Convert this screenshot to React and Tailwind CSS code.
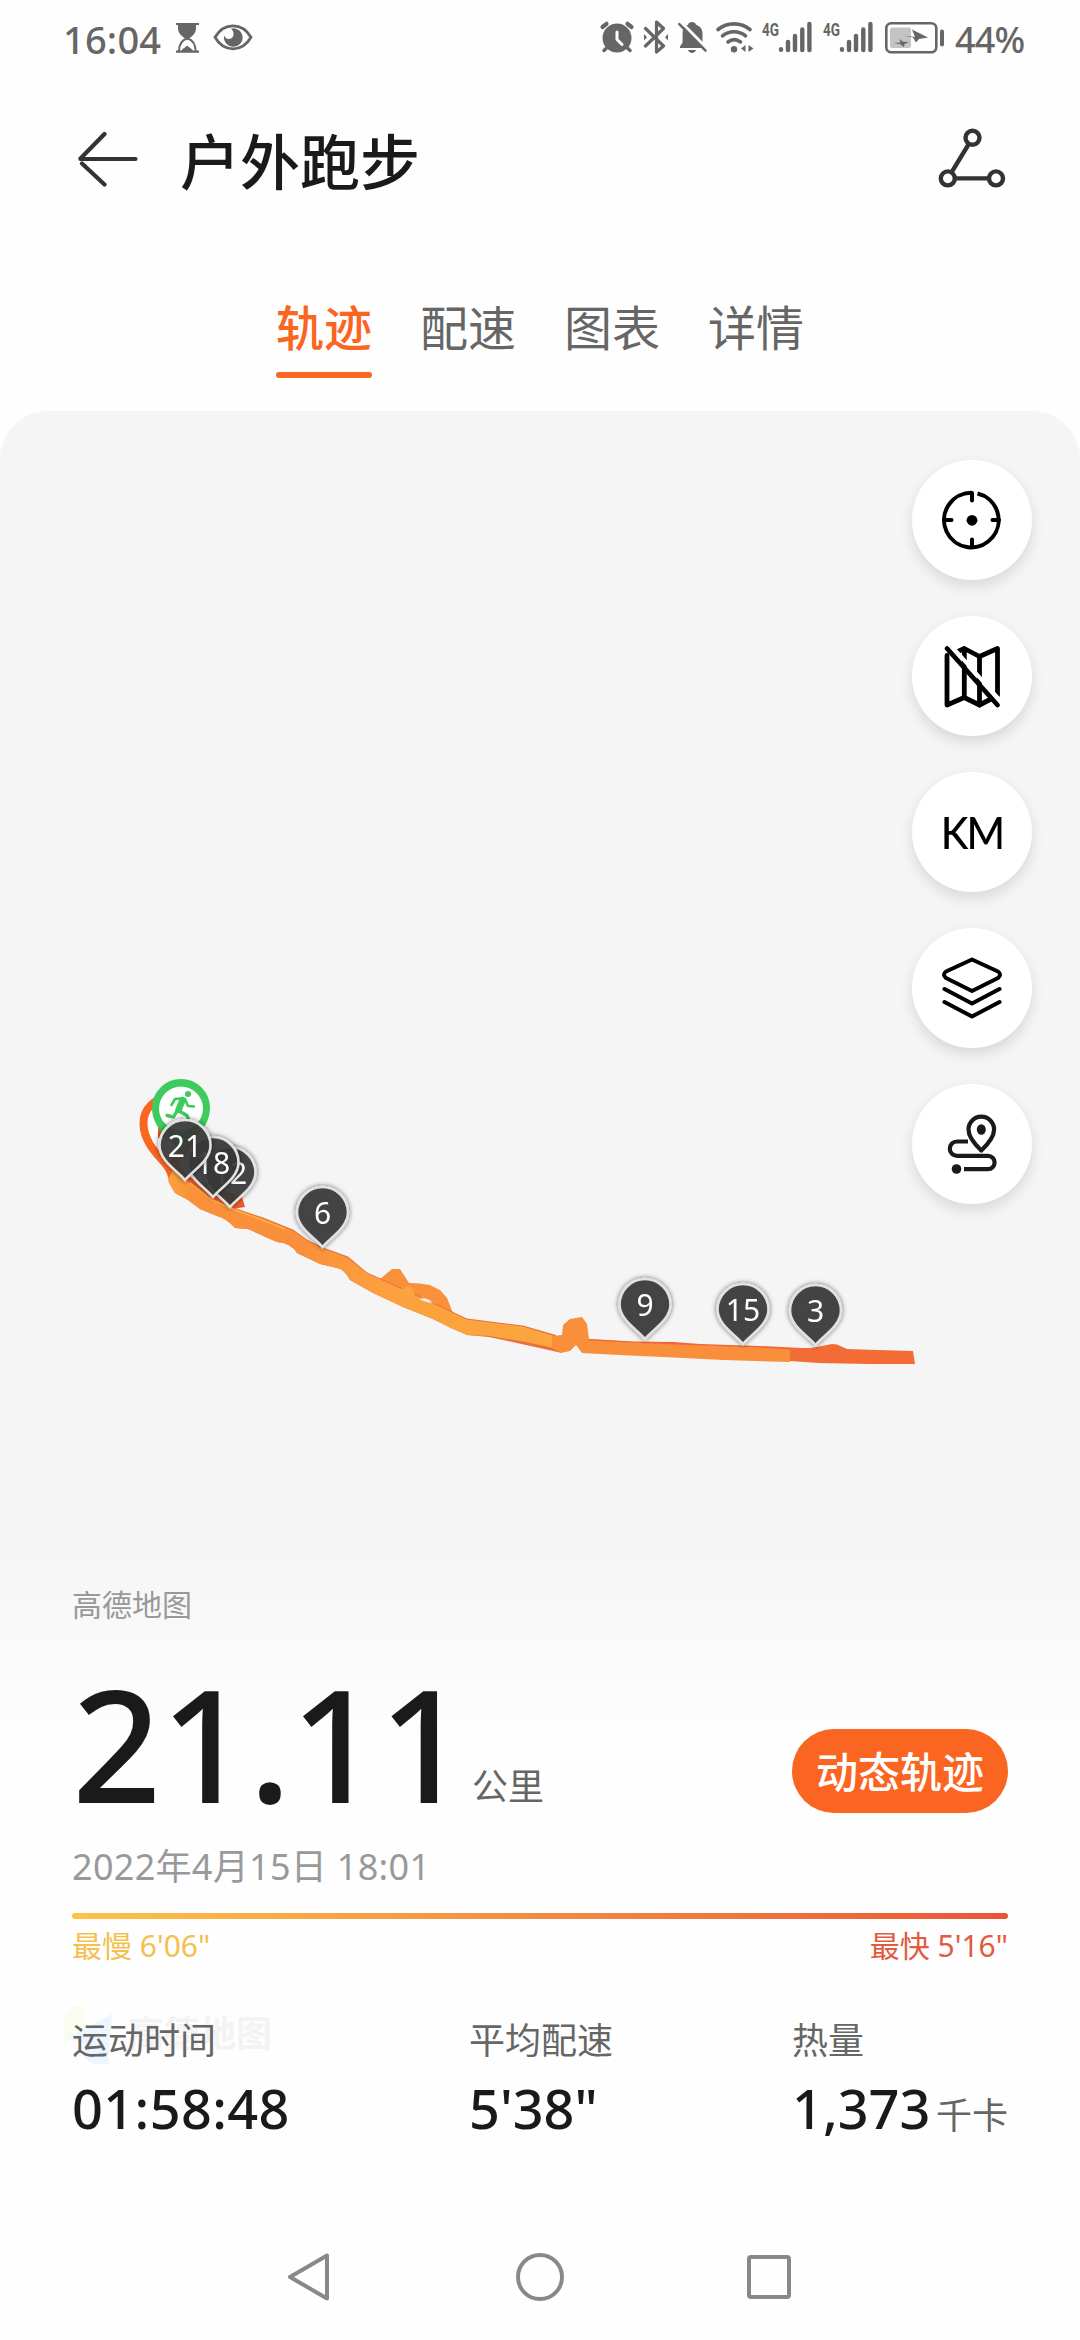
import React from 'react';

const tabs = ['轨迹', '配速', '图表', '详情'];

const pins = [
  { label: '12', x: 230, y: 1146 },
  { label: '18', x: 213, y: 1136 },
  { label: '21', x: 185, y: 1119 },
  { label: '6', x: 322.5, y: 1186 },
  { label: '9', x: 645, y: 1278 },
  { label: '15', x: 743, y: 1283 },
  { label: '3', x: 815.5, y: 1284 },
];

const Signal = () => (
  <svg className="overflow-visible" width="50" height="34" viewBox="762 20 50 34" fill="none" stroke="#666" strokeWidth="4.4" strokeLinecap="round">
    <text x="762" y="35.500" textLength="17" lengthAdjust="spacingAndGlyphs" fontSize="19" fontWeight="700" fill="#666" stroke="none" fontFamily="Roboto, sans-serif">4G</text>
    <path d="M781 49.2v.6M788 42v8M795 36v14M802.300 29.500v20.500M809.400 24v26" />
  </svg>
);

const StatusBar = () => (
  <div className="h-[76px] shrink-0 flex items-start pt-5 pl-16 pr-[57px] text-[#666]">
    <span className="-mt-px -ml-px w-[112px] text-[38px] leading-[40px] font-medium tracking-[0.2px]">16:04</span>
    <svg width="26" height="34" viewBox="175 20 26 34" fill="none" stroke="#666">
      <path d="M176 24h23M176 51.700h23" strokeWidth="2.200" />
      <path d="M178 24h18v4c0 5-3 7.500-7 10.500h-4c-4-3-7-5.500-7-10.500z" fill="#666" stroke="none" />
      <path d="M179 51c0-8 3-11 8.300-12.500c5 1.500 8.300 4.500 8.300 12.500" strokeWidth="2" />
      <path d="M181 51.500c1-3 4-3.500 6.200-6c2 2.500 5 3 6.200 6z" fill="#666" stroke="none" />
    </svg>
    <svg className="ml-3" width="40" height="34" viewBox="213 20 40 34" fill="none">
      <path d="M215 37.300c4-7 10-11.500 18-11.500s14 4.500 18 11.500c-4 7-10 11.500-18 11.500s-14-4.500-18-11.500z" stroke="#666" strokeWidth="2.800" />
      <path d="M231 28.500a9.300 9.300 0 1 1-6.800 7c1.200 3.500 4.800 4.400 7.300 2.700c3-2.200 2.600-6.800-.5-9.700z" fill="#666" />
    </svg>
    <div className="ml-auto flex items-start">
      <svg width="36" height="34" viewBox="599 20 36 34" fill="none" stroke="#666" strokeLinecap="round">
        <circle cx="617" cy="38" r="14.500" fill="#666" stroke="none" />
        <path d="M602.500 27l4-3.200M631.500 27l-4-3.200" strokeWidth="4.200" />
        <path d="M607 47.500l-3 3M627 47.500l3 3" strokeWidth="3.500" />
        <path d="M617 32v7.500l5 5" stroke="#fff" strokeWidth="3" />
      </svg>
      <svg className="ml-2" width="26" height="34" viewBox="643 20 26 34" fill="none" stroke="#666" strokeWidth="3.200" strokeLinecap="round">
        <path d="M645.500 28.500l18 17.500l-7 6v-30l7 6.500l-18 17.500" strokeLinejoin="round" />
        <path d="M644 34v6.500l3-3.200zM668 34v6.500l-3-3.200z" fill="#666" stroke="none" />
      </svg>
      <svg className="ml-2" width="32" height="34" viewBox="677 20 32 34" fill="none">
        <path d="M680 48v-1.600l2.600-3.800v-9c0-5 2-7.500 5.400-8.800c.6-1.800 2-2.800 4-2.800s3.500 1 4.100 2.800c4.200 1.500 6.400 4.500 6.400 8.800v9l2.500 3.800v1.600zM688 50h8c-1 2.200-2.400 3-4 3s-3-.8-4-3z" fill="#666" />
        <path d="M681.500 22.500l28 28.500" stroke="#fff" strokeWidth="3" />
        <path d="M679.300 24.200l26.200 26.500" stroke="#666" strokeWidth="2.600" strokeLinecap="round" />
      </svg>
      <svg className="ml-[6px]" width="40" height="34" viewBox="715 20 40 34" fill="none" stroke="#666" strokeWidth="3.600" strokeLinecap="round">
        <path d="M718 29.500c9-7.500 23-7.500 32 0M722.500 35.800c6.500-5.500 16.500-5.500 23 0M728 42c4-3 8.500-3 12.500 0" />
        <circle cx="734" cy="49.300" r="3.200" fill="#666" stroke="none" />
        <path d="M745.500 45v7l-4.500-3.500zM748.500 45v7l5-3.500z" fill="#666" stroke="none" />
      </svg>
      <div className="ml-[7px] flex gap-[11px]">
        <Signal />
        <Signal />
      </div>
      <svg className="ml-3" width="60" height="34" viewBox="885 21 60 34" fill="none">
        <rect x="886.300" y="24.200" width="50" height="29" rx="5" stroke="#666" strokeWidth="2.600" />
        <rect x="890" y="28.500" width="21" height="20.500" rx="2" fill="#c4c4c4" />
        <path d="M903 36.500l12 1.500l-3-7.500l16 8l-9 1.500l-3 3.500l-3-5zM893.500 44l7-.5l-1-3.600l3.500 2.800l6 .3l-4.500 2l-.5 3l-4-3z" fill="#666" />
        <path d="M942 32.500v13" stroke="#666" strokeWidth="4" strokeLinecap="round" />
      </svg>
      <span className="ml-[10px] w-[68px] text-[36px] leading-[40px] font-medium tracking-[-0.8px]">44%</span>
    </div>
  </div>
);

const Header = () => (
  <div className="h-[168px] shrink-0 flex items-center pl-[78px] pr-[74px]">
    <svg className="-mt-[2px]" width="60" height="56" viewBox="78 131 60 56" fill="none" stroke="#333" strokeWidth="4.200" strokeLinecap="round">
      <path d="M104.500 134L80.500 158.500M80.500 159h55M104.500 184.500L82 163.500" />
    </svg>
    <h1 className="ml-[42px] pt-[3px] text-[60px] leading-[72px] font-medium text-[#1a1a1a]">户外跑步</h1>
    <svg className="ml-auto -mt-1" width="68" height="62" viewBox="938 127 68 62" fill="none" stroke="#333" strokeWidth="4.400">
      <circle cx="972.500" cy="137.800" r="7" />
      <circle cx="947.800" cy="178.400" r="7" />
      <circle cx="996" cy="178.400" r="7" />
      <path d="M968.800 144L951.500 172.400M955 178.400h34" />
    </svg>
  </div>
);

const Tabs = () => (
  <div className="h-[167px] shrink-0 flex justify-center gap-12 pt-[56px]">
    {tabs.map((tab, i) => (
      <div
        key={tab}
        className={`w-24 text-[48px] leading-[56px] whitespace-nowrap ${i === 0 ? 'text-[#fb6522] font-medium' : 'text-[#666]'}`}
      >
        {tab}
        {i === 0 && <div className="mt-4 h-[6px] rounded-full bg-[#fb6522]" />}
      </div>
    ))}
  </div>
);

const Fab = ({ children }) => (
  <button className="w-[120px] h-[120px] rounded-full bg-white flex items-center justify-center shadow-[0_6px_14px_rgba(0,0,0,0.12)]">
    {children}
  </button>
);

const MapButtons = () => (
  <div className="absolute right-12 top-[49px] flex flex-col gap-9">
    <Fab>
      <svg width="72" height="72" viewBox="0 0 72 72" fill="none" stroke="#000" strokeWidth="4" strokeLinecap="round">
        <path d="M36 8.800A27.300 27.300 0 1 0 41.500 9.500" strokeLinecap="butt" />
        <path d="M36 9v7.500M36 63v-7.500M9 36h6.500M63 36h-6.500" />
        <circle cx="36" cy="36.300" r="5.400" fill="#000" stroke="none" />
      </svg>
    </Fab>
    <Fab>
      <svg width="72" height="72" viewBox="0 0 72 72" fill="none" stroke="#000" strokeWidth="4.800" strokeLinecap="round" strokeLinejoin="round">
        <path d="M11 15.500v49.500L28.300 57.500L43.500 65L55 59" />
        <path d="M22 11.500L28.300 8.500L43.500 16.500L61.500 8.500v47" />
        <path d="M28.300 9v48M43.500 17v48" />
        <path d="M15.500 6l50 56" stroke="#fff" strokeWidth="4" />
        <path d="M11 8.500l50.500 56.500" />
      </svg>
    </Fab>
    <Fab>
      <span className="text-[45px] leading-none text-black font-[Lato] font-medium tracking-[-2px] scale-x-[0.92]">KM</span>
    </Fab>
    <Fab>
      <svg width="72" height="72" viewBox="0 0 72 72" fill="none" stroke="#000" strokeWidth="4" strokeLinecap="round" strokeLinejoin="round">
        <path d="M36 7.500L62 19.500q4 3 0 6.500L36 39L10 26q-4-3.500 0-6.500z" />
        <path d="M8.500 37L36 51.500L63.500 37M8.500 50L36 64.500L63.500 50" />
      </svg>
    </Fab>
    <Fab>
      <svg width="72" height="72" viewBox="0 0 72 72" fill="none" stroke="#1a1a1a" strokeWidth="4.200">
        <path d="M45.300 42.500C39 36.500 32.500 29.500 32.500 21.500a12.800 12.800 0 0 1 25.600 0C58.100 29.500 51.600 36.500 45.300 42.500z" strokeLinejoin="round" />
        <ellipse cx="45.300" cy="21.500" rx="4.500" ry="5.200" fill="#1a1a1a" stroke="none" />
        <path d="M32 33.500H21a7.200 7.200 0 0 0 0 14.400H52a6.600 6.600 0 0 1 0 13.200H28" />
        <circle cx="20.500" cy="61" r="4.800" fill="#1a1a1a" stroke="none" />
      </svg>
    </Fab>
  </div>
);

const Pin = ({ label, x, y }) => (
  <g transform={`translate(${x} ${y})`}>
    <path
      d="M0 61C-7 52-25.500 42-25.500 26.500A25.500 25.500 0 0 1 25.500 26.500C25.500 42 7 52 0 61Z"
      fill="#383838"
      fillOpacity="0.86"
      stroke="#e2e2e2"
      strokeWidth="2.600"
    />
    <text x="0" y="37.500" textAnchor="middle" fontSize="30" fill="#fff">{label}</text>
  </g>
);

const TrackMap = () => (
  <svg className="block" width="1080" height="1129" viewBox="0 411 1080 1129" fill="none">
    <defs>
      <filter id="pin-shadow" x="-30%" y="-30%" width="160%" height="160%">
        <feDropShadow dx="0" dy="0" stdDeviation="2.800" floodColor="#000" floodOpacity="0.6" />
      </filter>
      <linearGradient id="pace" gradientUnits="userSpaceOnUse" x1="163" y1="0" x2="554" y2="0">
        <stop offset="0" stopColor="#fba63e" />
        <stop offset="0.080" stopColor="#fa9038" />
        <stop offset="0.350" stopColor="#fa8f3b" />
        <stop offset="0.550" stopColor="#fba03d" />
        <stop offset="1" stopColor="#fba63e" />
      </linearGradient>
    </defs>

    {/* detours beside the main road */}
    <path d="M380 1279L392 1269H400L409 1283L420 1283.500L430 1285L440 1290L447 1298L453 1313L437 1307Q432 1298 415 1296L405 1292Z" fill="#f9913c" />
    <path d="M160 1130L187 1176L242 1197L245 1207L226 1210L180 1185Z" fill="#ef5a30" />

    {/* main track with the faster lap showing along its edge */}
    <path d="M163 1150L187 1180L212 1198L235 1208L263 1217.500L293 1229.500L307 1239.500L323 1247.500L348 1256.500L367 1272.500L403 1288.500L452 1311.500L467 1318.500L523 1325.500L556 1335L562 1353L526 1345L489 1337L467 1335L451 1328L433 1319L403 1307L373 1293L350 1280Q344 1269 337 1268L320 1264L297 1253Q291 1243 277 1242L248 1229L235 1228Q226 1218 217 1216L200 1209L188 1200L175 1193L169 1183Z" fill="#e9703a" />
    <path d="M163 1150L187 1181L212 1200L235 1209L263 1218.500L292 1230.500L307 1240.500L323 1248.500L347 1257.500L367 1273.500L403 1289.500L452 1312.500L467 1319.500L523 1326.500L554 1336V1348L526 1342L489 1336L467 1335L451 1328L433 1319L403 1307L373 1293L350 1280Q344 1269 337 1268L320 1264L297 1253Q291 1243 277 1242L248 1229L235 1228Q226 1218 217 1216L200 1209L188 1200L175 1193L169 1183Z" fill="url(#pace)" />
    <path d="M190 1183L212 1200L235 1210L262 1220L285 1229" stroke="#fcb043" strokeWidth="1.500" />
    <circle cx="408" cy="1293" r="6.500" fill="#fba33e" />
    <path d="M419 1299Q427 1297 432 1303.500L424 1301Z" fill="#f8f0e8" />
    <path d="M552 1336L562 1335L563 1325L570 1319L582 1317L587 1324L589 1339L634 1342L674 1344L760 1347L791 1348.500L790 1362L723 1360L663 1357L619 1355L582 1353L576 1345L570 1351L561 1353L552 1348Z" fill="#fa8f3b" />
    <path d="M589 1339L634 1341.500L674 1342L700 1344L760 1346L811 1348.500L790 1349.500L760 1347.500L674 1344.500L589 1340.500Z" fill="#ee6738" />
    <path d="M790 1348L811 1348L822 1346L832 1344L837 1344.500L847 1349L878 1350L913 1351L915 1364H867L819 1363L790 1361Z" fill="#f46c35" />

    {/* finish pin, mostly covered */}
    <path d="M169 1169C164 1159 143.500 1146 143.500 1123A25.500 25.500 0 0 1 194.500 1123C194.500 1146 174 1159 169 1169Z" fill="#fff" stroke="#fb6522" strokeWidth="8" />
    <path d="M158 1126h12v12h-12z" fill="#ef5a30" />

    {/* start pin */}
    <path d="M181 1148C175 1138 155.500 1128 155.500 1108A25.500 25.500 0 0 1 206.500 1108C206.500 1128 187 1138 181 1148Z" fill="#3ccb5c" stroke="#3ccb5c" strokeWidth="7" />
    <circle cx="181" cy="1108.500" r="22" fill="#fff" />
    <circle cx="188" cy="1094" r="3" fill="#3ccb5c" />
    <g stroke="#3ccb5c" strokeLinecap="round" strokeLinejoin="round">
      <path d="M182.500 1100L178.500 1110" strokeWidth="6.500" />
      <path d="M181 1098.500L175 1099L171.500 1105M185 1099L188 1106L194 1106.500" strokeWidth="2.600" />
      <path d="M179 1111L187 1115.500L189.500 1123M177 1111L173.500 1117L167 1115.500" strokeWidth="3.400" />
    </g>

    {pins.map((pin) => (
      <g key={pin.label} filter="url(#pin-shadow)">
        <Pin {...pin} />
      </g>
    ))}
  </svg>
);

const Summary = () => (
  <div className="h-[674px] shrink-0 px-[72px] pt-[41px] bg-linear-to-b from-[#f5f5f5] to-[#fefefe] to-[200px]">
    <p className="text-[30px] leading-[48px] text-[#999]">高德地图</p>

    <div className="mt-[54px] h-[140px] flex items-start">
      <span className="w-[400px] text-[156px] leading-[120px] font-medium tracking-[-0.8px] text-[#1a1a1a]">21.11</span>
      <span className="mt-[80px] text-[36px] leading-[48px] text-[#666]">公里</span>
      <button className="ml-auto mt-[46px] w-[216px] h-[84px] rounded-full bg-[#fb6522] text-white text-[42px] leading-[86px] font-medium">
        动态轨迹
      </button>
    </div>

    <p className="mt-5 text-[36px] leading-[48px] tracking-[0.3px] text-[#999]">2022年4月15日 18:01</p>
    <div className="mt-[22px] h-[6px] rounded-full bg-linear-to-r from-[#fcc348] via-[#f28b42] to-[#ea5438]" />
    <div className="mt-[7px] flex justify-between text-[30px] leading-[40px]">
      <span className="text-[#f4c04e]">最慢 6'06"</span>
      <span className="text-[#e25b3e]">最快 5'16"</span>
    </div>

    <div className="relative mt-[51px] grid grid-cols-[397px_323px_216px]">
      {/* map provider watermark showing through */}
      <div className="absolute -left-2 -top-[11px] flex items-start">
        <svg width="50" height="60" viewBox="0 0 50 60">
          <path d="M8 0h12v26L0 38V10z" fill="#f9fdf0" />
          <path d="M48 8L4 32l16 6v14l10 6h14z" fill="#edf5fe" />
        </svg>
        <span className="ml-[14px] mt-1 text-[36px] leading-[48px] font-bold text-[#f3f3f3]">高德地图</span>
      </div>
      <div className="relative whitespace-nowrap">
        <p className="text-[36px] leading-[48px] text-[#666]">运动时间</p>
        <p className="mt-[11px] text-[54px] leading-[64px] font-medium tracking-[0.4px] text-[#1a1a1a]">01:58:48</p>
      </div>
      <div className="whitespace-nowrap">
        <p className="text-[36px] leading-[48px] text-[#666]">平均配速</p>
        <p className="mt-[11px] text-[54px] leading-[64px] font-medium text-[#1a1a1a]">5'38"</p>
      </div>
      <div className="whitespace-nowrap">
        <p className="text-[36px] leading-[48px] text-[#666]">热量</p>
        <p className="mt-[11px] flex items-baseline justify-between text-[54px] leading-[64px] font-medium text-[#1a1a1a]">
          1,373
          <span className="text-[36px] font-normal text-[#666]">千卡</span>
        </p>
      </div>
    </div>
  </div>
);

const NavBar = () => (
  <div className="h-[126px] shrink-0 flex items-center bg-[#fefefe] pl-[286px]">
    <svg width="46" height="52" viewBox="286 2251 46 52" fill="none" stroke="#888" strokeWidth="4" strokeLinejoin="round">
      <path d="M290 2277L327 2255.500V2298.500Z" />
    </svg>
    <div className="ml-[184px] w-12 h-12 rounded-full border-4 border-[#888]" />
    <div className="ml-[183px] w-11 h-11 rounded-[4px] border-4 border-[#888]" />
  </div>
);

export default function App() {
  return (
    <div className="w-[1080px] h-[2340px] overflow-hidden flex flex-col bg-[#fefefe] font-['Noto_Sans','Noto_Sans_CJK_SC',sans-serif]">
      <StatusBar />
      <Header />
      <Tabs />
      <div className="relative h-[1129px] shrink-0 rounded-t-[48px] overflow-hidden bg-[#f5f5f5]">
        <TrackMap />
        <MapButtons />
      </div>
      <Summary />
      <NavBar />
    </div>
  );
}
